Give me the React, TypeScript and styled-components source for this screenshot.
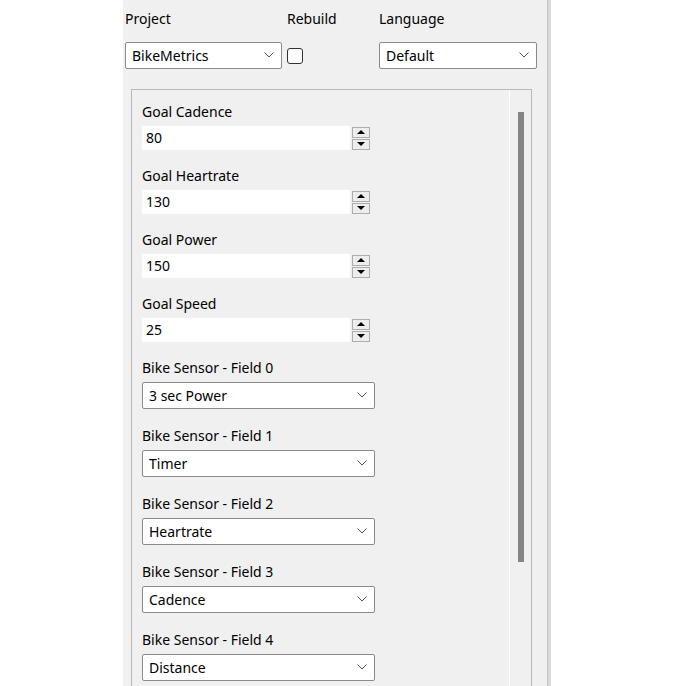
import React from 'react'
import styled, { createGlobalStyle } from 'styled-components'

const GlobalStyle = createGlobalStyle`
  html, body {
    margin: 0;
    padding: 0;
    background: #ffffff;
  }
  body {
    font-family: "Noto Sans", "Open Sans", sans-serif;
    font-size: 14px;
    color: #000000;
  }
`

const Page = styled.div`
  display: flex;
  height: 686px;
  overflow: hidden;
  background: #ffffff;
`

const Panel = styled.div`
  margin-left: 123px;
  width: 424px;
  height: 100%;
  background: #f0f0f0;
  display: flex;
  flex-direction: column;
`

const Edge = styled.div`
  width: 4px;
  height: 100%;
  background: #d9d9d9;
  border-left: 1px solid #c2c2c2;
  box-sizing: border-box;
`

const Header = styled.div`
  display: grid;
  grid-template-columns: 162px 92px 158px;
  grid-template-rows: 20px 27px;
  row-gap: 13px;
  padding: 9px 0 0 2px;
  align-items: center;
`

const Label = styled.div`
  font-size: 14px;
  line-height: 20px;
  white-space: nowrap;
`

const Select = styled.div<{ $width: number }>`
  box-sizing: border-box;
  width: ${({ $width }) => $width}px;
  height: 27px;
  background: #ffffff;
  border: 1px solid #8a8a8a;
  border-radius: 2px;
  display: flex;
  align-items: center;
  justify-content: space-between;
  padding: 0 7px 1px 6px;
  font-size: 14px;
`

const Checkbox = styled.div`
  box-sizing: border-box;
  width: 16px;
  height: 16px;
  border: 1px solid #333333;
  border-radius: 3px;
  background: #ffffff;
`

const Frame = styled.div`
  margin: 20px 15px 0 8px;
  flex: 1;
  display: flex;
  border: 1px solid #b9b9b9;
  border-bottom: none;
  min-height: 0;
`

const Fields = styled.div`
  flex: 1;
  padding: 12px 0 0 10px;
  display: flex;
  flex-direction: column;
`

const Field = styled.div<{ $gap: number }>`
  display: flex;
  flex-direction: column;
  gap: 4px;
  margin-bottom: ${({ $gap }) => $gap}px;
`

const SpinRow = styled.div`
  display: flex;
  gap: 2px;
  align-items: center;
`

const NumberBox = styled.div`
  width: 208px;
  height: 24px;
  background: #ffffff;
  display: flex;
  align-items: center;
  padding: 0 0 2px 4px;
  box-sizing: border-box;
  font-size: 14px;
`

const Spinner = styled.div`
  display: flex;
  flex-direction: column;
  width: 18px;
  gap: 1px;
`

const SpinButton = styled.div`
  box-sizing: border-box;
  height: 11px;
  border: 1px solid #adadad;
  background: #ededed;
  display: flex;
  align-items: center;
  justify-content: center;
`

const ScrollTrack = styled.div`
  width: 21px;
  border-left: 1px solid #ffffff;
  display: flex;
  justify-content: center;
  padding-top: 22px;
`

const Thumb = styled.div`
  width: 6px;
  height: 450px;
  background: #858585;
`

const Chevron = () => (
  <svg width="10" height="6" viewBox="0 0 10 6">
    <path d="M0.5 0.5 L5 5 L9.5 0.5" fill="none" stroke="#555" strokeWidth="1" />
  </svg>
)

const Arrow = ({ up }: { up?: boolean }) => (
  <svg width="8" height="4" viewBox="0 0 8 4">
    <path d={up ? 'M0 4 L4 0 L8 4 Z' : 'M0 0 L4 4 L8 0 Z'} fill="#000" />
  </svg>
)

const numbers = [
  { label: 'Goal Cadence', value: '80' },
  { label: 'Goal Heartrate', value: '130' },
  { label: 'Goal Power', value: '150' },
  { label: 'Goal Speed', value: '25' },
]

const sensors = ['3 sec Power', 'Timer', 'Heartrate', 'Cadence', 'Distance']

export default function App() {
  return (
    <Page>
      <GlobalStyle />
      <Panel>
        <Header>
          <Label>Project</Label>
          <Label>Rebuild</Label>
          <Label>Language</Label>
          <Select $width={157}>
            <span>BikeMetrics</span>
            <Chevron />
          </Select>
          <Checkbox />
          <Select $width={158}>
            <span>Default</span>
            <Chevron />
          </Select>
        </Header>
        <Frame>
          <Fields>
            {numbers.map((n) => (
              <Field key={n.label} $gap={16}>
                <Label>{n.label}</Label>
                <SpinRow>
                  <NumberBox>{n.value}</NumberBox>
                  <Spinner>
                    <SpinButton>
                      <Arrow up />
                    </SpinButton>
                    <SpinButton>
                      <Arrow />
                    </SpinButton>
                  </Spinner>
                </SpinRow>
              </Field>
            ))}
            {sensors.map((s, i) => (
              <Field key={s} $gap={17}>
                <Label>Bike Sensor - Field {i}</Label>
                <Select $width={233}>
                  <span>{s}</span>
                  <Chevron />
                </Select>
              </Field>
            ))}
          </Fields>
          <ScrollTrack>
            <Thumb />
          </ScrollTrack>
        </Frame>
      </Panel>
      <Edge />
    </Page>
  )
}
